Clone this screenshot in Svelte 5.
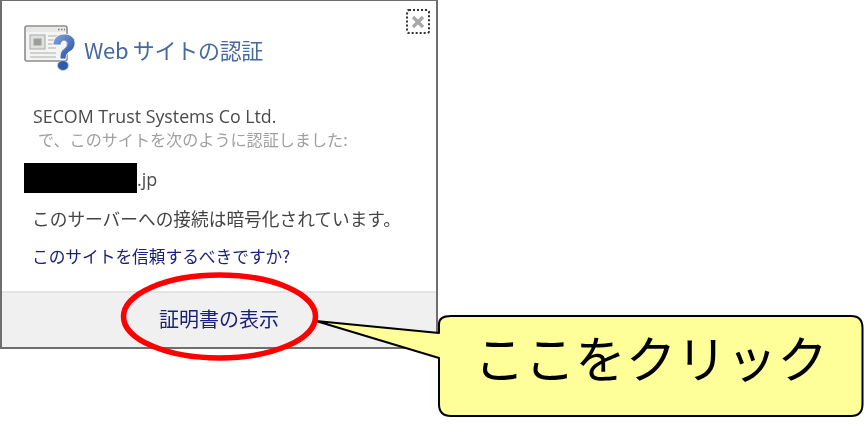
<script>
  const redactedAlt = '';
</script>

<div class="page">
  <section class="dialog">
    <button class="close" aria-label="閉じる">
      <svg width="16" height="16" viewBox="0 0 16 16"><path d="M3 3 L13 13 M13 3 L3 13" stroke="#a8a8a8" stroke-width="3.4" fill="none"/></svg>
    </button>
    <div class="body">
      <header class="title">
        <svg class="icon" width="52" height="50" viewBox="0 0 52 50">
          <defs>
            <linearGradient id="q" x1="0" y1="0" x2="1" y2="1">
              <stop offset="0" stop-color="#86aae0"/>
              <stop offset="1" stop-color="#1f4a9c"/>
            </linearGradient>
          </defs>
          <rect x="1" y="2" width="42" height="35" rx="2" fill="#f4f4f2" stroke="#8d8d8d" stroke-width="1.6"/>
          <rect x="2" y="3" width="40" height="5" fill="#e8e8e6"/>
          <path d="M34 5.500h1.500M37 5.500h1.500M40 5.500h1" stroke="#777" stroke-width="1.300"/>
          <rect x="6" y="11" width="15" height="14" fill="#e0e0de" stroke="#a8a8a8"/>
          <rect x="9.500" y="14.500" width="8" height="7" fill="#9a9f9a"/>
          <path d="M24 12h13M24 16h10M24 20h8M24 24h8M6 29h26M6 33h26" stroke="#c4c4c4" stroke-width="1.300"/>
          <path d="M29 21c0-7 5-11 11-11 7 0 11 4 11 9 0 4-2 7-6 9-2 1.500-3 3-3 7h-6c0-6 1-8 4-10.500 2-1.500 3-3 3-4.500 0-2-1-3-3-3-2 0-3 1.500-3 4z" fill="url(#q)" stroke="#fff" stroke-width=".8"/>
          <ellipse cx="39" cy="41.500" rx="5.500" ry="5" fill="#2c5bab" stroke="#c8d2e2" stroke-width=".8"/>
        </svg>
        <h1>Web サイトの認証</h1>
      </header>

      <div class="issuer">
        <p class="org">SECOM Trust Systems Co Ltd.</p>
        <p class="verified">で、このサイトを次のように認証しました:</p>
      </div>

      <p class="domain"><span class="redact">{redactedAlt}</span><span class="tld">.jp</span></p>
      <p class="line">このサーバーへの接続は暗号化されています。</p>
      <a class="link" href="#trust">このサイトを信頼するべきですか?</a>
    </div>
    <footer class="foot">
      <a class="link" href="#cert">証明書の表示</a>
    </footer>
  </section>

  <svg class="marks" width="864" height="427" viewBox="0 0 864 427">
    <path d="M316 321 L439 333 V324 Q439 316 451 316 H851 Q862.500 316 862.500 328 V404 Q862.500 416 851 416 H451 Q439 416 439 404 V358 Z" fill="#ffff99" stroke="#000" stroke-width="2" stroke-linejoin="round"/>
    <ellipse cx="219.500" cy="316.500" rx="96" ry="41.500" fill="none" stroke="#ff0000" stroke-width="5.500"/>
  </svg>
  <div class="callout">ここをクリック</div>
</div>

<style>
  :global(body) { margin: 0; background: #fff; }
  .page {
    position: relative;
    width: 864px;
    height: 427px;
    overflow: hidden;
    font-family: "Noto Sans CJK JP", "Noto Sans", sans-serif;
  }
  .dialog {
    position: relative;
    box-sizing: border-box;
    width: 438px;
    height: 349px;
    border: 2px solid #6e6e6e;
    border-top-width: 1px;
    background: #fff;
    display: flex;
    flex-direction: column;
    filter: blur(0.4px);
  }
  .close {
    position: absolute;
    top: 8px;
    right: 6px;
    width: 24px;
    height: 25px;
    padding: 0;
    border: 2px dotted #333;
    border-radius: 3px;
    background: #fff;
    display: flex;
    align-items: center;
    justify-content: center;
  }
  .body {
    flex: 1;
    display: flex;
    flex-direction: column;
    align-items: flex-start;
    padding: 0 0 0 30px;
  }
  .title {
    display: flex;
    align-items: center;
    gap: 8px;
    margin: 23px 0 0 -8px;
    height: 50px;
  }
  .icon { flex: none; }
  h1 {
    margin: 0;
    font-size: 22px;
    font-weight: 400;
    line-height: 30px;
    color: #46699f;
    letter-spacing: -0.3px;
    white-space: nowrap;
  }
  p { margin: 0; white-space: nowrap; }
  .issuer { margin-top: 31px; }
  .org {
    font-size: 17.800px;
    line-height: 22px;
    color: #4a4a4a;
    font-family: "Open Sans", "Noto Sans CJK JP", sans-serif;
    margin-left: 1px;
  }
  .verified {
    font-size: 16.100px;
    line-height: 24px;
    color: #a0a0a0;
    padding-left: 6px;
  }
  .domain {
    display: flex;
    align-items: center;
    margin: 12px 0 0 -8px;
    height: 30px;
    font-size: 18px;
    color: #4a4a4a;
    font-family: "Open Sans", sans-serif;
  }
  .redact {
    display: block;
    width: 113px;
    height: 30px;
    background: #000;
  }
  .tld { padding-top: 2px; }
  .line {
    margin-top: 12px;
    font-size: 17.700px;
    line-height: 26px;
    color: #444;
  }
  .link {
    color: #1c2178;
    text-decoration: none;
    font-size: 16.700px;
    line-height: 26px;
    white-space: nowrap;
  }
  .body .link { margin-top: 12px; }
  .foot {
    flex: none;
    box-sizing: border-box;
    height: 56px;
    background: #f0f0f0;
    border-top: 2px solid #e4e4e4;
    display: flex;
    align-items: center;
    justify-content: center;
    padding-bottom: 2px;
  }
  .foot .link { font-size: 20px; }
  .marks {
    position: absolute;
    inset: 0;
    pointer-events: none;
  }
  .callout {
    position: absolute;
    left: 439px;
    top: 317px;
    width: 424px;
    height: 80px;
    display: flex;
    align-items: center;
    justify-content: center;
    font-family: "Noto Sans CJK JP", sans-serif;
    font-size: 50.500px;
    color: #000;
    white-space: nowrap;
    box-sizing: border-box;
    padding-bottom: 3px;
  }
</style>
